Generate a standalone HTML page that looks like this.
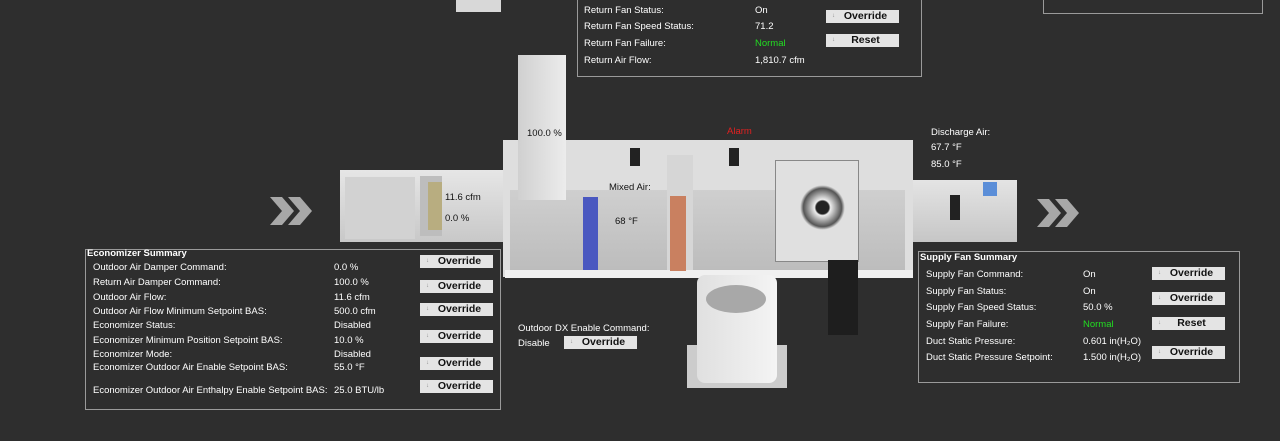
<!DOCTYPE html><html><head><style>
body{margin:0;width:1280px;height:441px;background:#2e2e2e;overflow:hidden;position:relative;font-family:"Liberation Sans",sans-serif;font-size:9.5px;color:#fff}
.a{position:absolute}
.p{position:absolute;border:1px solid #9a9a9a;background:#2e2e2e}
.btn{position:absolute;width:73px;height:13px;background:#e4e4e4;color:#111;font-size:10.5px;line-height:13px;text-align:center;font-weight:bold;text-indent:6px}
.btn:before{content:"↓";font-size:6px;color:#888;position:absolute;left:0px;font-weight:normal}
.g{color:#22dd22}
.k{color:#111}
</style></head><body>
<div class="a" style="left:456px;top:0;width:45px;height:12px;background:#d8d8d8"></div>
<div class="p" style="left:1043px;top:-2px;width:218px;height:14px"></div>
<div class="p" style="left:577px;top:-2px;width:343px;height:77px"></div>
<div class="a" style="left:584px;top:5px">Return Fan Status:</div><div class="a" style="left:755px;top:5px">On</div>
<div class="a" style="left:584px;top:21px">Return Fan Speed Status:</div><div class="a" style="left:755px;top:21px">71.2</div>
<div class="a" style="left:584px;top:38px">Return Fan Failure:</div><div class="a g" style="left:755px;top:38px">Normal</div>
<div class="a" style="left:584px;top:55px">Return Air Flow:</div><div class="a" style="left:755px;top:55px">1,810.7 cfm</div>
<div class="btn" style="left:826px;top:10px">Override</div><div class="btn" style="left:826px;top:34px">Reset</div>

<svg class="a" style="left:268px;top:195px" width="48" height="32"><path d="M2 2h12l12 14-12 14H2l12-14z M20 2h12l12 14-12 14H20l12-14z" fill="#a8a8a8"/></svg>
<svg class="a" style="left:1035px;top:197px" width="48" height="32"><path d="M2 2h12l12 14-12 14H2l12-14z M20 2h12l12 14-12 14H20l12-14z" fill="#a8a8a8"/></svg>
<div class="a" style="left:340px;top:170px;width:172px;height:72px;background:linear-gradient(#e6e6e6,#c8c8c8)"></div>
<div class="a" style="left:345px;top:177px;width:70px;height:62px;background:#d2d2d2"></div>
<div class="a" style="left:420px;top:176px;width:22px;height:60px;background:#bdbdbd"></div>
<div class="a" style="left:428px;top:182px;width:14px;height:48px;background:#b8ad80"></div>
<div class="a" style="left:905px;top:180px;width:112px;height:62px;background:linear-gradient(#e4e4e4,#c6c6c6)"></div>
<div class="a" style="left:950px;top:195px;width:10px;height:25px;background:#222"></div>
<div class="a" style="left:983px;top:182px;width:14px;height:14px;background:#5b8ed8"></div>
<div class="a" style="left:503px;top:140px;width:410px;height:137px;background:#dedede"></div>
<div class="a" style="left:510px;top:190px;width:395px;height:82px;background:linear-gradient(#cfcfcf,#bcbcbc)"></div>
<div class="a" style="left:505px;top:270px;width:408px;height:8px;background:#f0f0f0"></div>
<div class="a" style="left:518px;top:55px;width:48px;height:145px;background:linear-gradient(90deg,#d0d0d0,#ececec)"></div>
<div class="a" style="left:583px;top:197px;width:15px;height:73px;background:#4a58c0"></div>
<div class="a" style="left:667px;top:155px;width:26px;height:115px;background:#d6d6d6"></div>
<div class="a" style="left:670px;top:196px;width:16px;height:75px;background:#c98060"></div>
<div class="a" style="left:630px;top:148px;width:10px;height:18px;background:#222"></div>
<div class="a" style="left:729px;top:148px;width:10px;height:18px;background:#222"></div>
<div class="a" style="left:775px;top:160px;width:82px;height:100px;background:#e0e0e0;border:1px solid #888"></div>
<div class="a" style="left:800px;top:185px;width:45px;height:45px;border-radius:50%;background:radial-gradient(#222 20%,#eee 25%,#555 60%,#ddd 70%)"></div>
<div class="a" style="left:828px;top:260px;width:30px;height:75px;background:#1e1e1e"></div>
<div class="a" style="left:687px;top:345px;width:100px;height:43px;background:#ccc"></div>
<div class="a" style="left:697px;top:275px;width:80px;height:108px;background:linear-gradient(90deg,#e0e0e0,#f4f4f4);border-radius:8px"></div>
<div class="a" style="left:706px;top:285px;width:60px;height:28px;border-radius:50%;background:#a8a8a8"></div>

<div class="a k" style="left:527px;top:128px">100.0 %</div>
<div class="a k" style="left:445px;top:192px">11.6 cfm</div>
<div class="a k" style="left:445px;top:213px">0.0 %</div>
<div class="a k" style="left:609px;top:182px">Mixed Air:</div>
<div class="a k" style="left:615px;top:216px">68 °F</div>
<div class="a" style="left:727px;top:126px;color:#e02020">Alarm</div>
<div class="a" style="left:931px;top:127px">Discharge Air:</div>
<div class="a" style="left:931px;top:142px">67.7 °F</div>
<div class="a" style="left:931px;top:159px">85.0 °F</div>
<div class="a" style="left:518px;top:323px">Outdoor DX Enable Command:</div>
<div class="a" style="left:518px;top:338px">Disable</div>
<div class="btn" style="left:564px;top:336px">Override</div>

<div class="p" style="left:85px;top:249px;width:414px;height:159px"></div>
<div class="a" style="left:87px;top:248px;font-weight:bold">Economizer Summary</div>
<div class="a" style="left:93px;top:262px">Outdoor Air Damper Command:</div><div class="a" style="left:334px;top:262px">0.0 %</div>
<div class="a" style="left:93px;top:277px">Return Air Damper Command:</div><div class="a" style="left:334px;top:277px">100.0 %</div>
<div class="a" style="left:93px;top:292px">Outdoor Air Flow:</div><div class="a" style="left:334px;top:292px">11.6 cfm</div>
<div class="a" style="left:93px;top:306px">Outdoor Air Flow Minimum Setpoint BAS:</div><div class="a" style="left:334px;top:306px">500.0 cfm</div>
<div class="a" style="left:93px;top:320px">Economizer Status:</div><div class="a" style="left:334px;top:320px">Disabled</div>
<div class="a" style="left:93px;top:335px">Economizer Minimum Position Setpoint BAS:</div><div class="a" style="left:334px;top:335px">10.0 %</div>
<div class="a" style="left:93px;top:349px">Economizer Mode:</div><div class="a" style="left:334px;top:349px">Disabled</div>
<div class="a" style="left:93px;top:362px">Economizer Outdoor Air Enable Setpoint BAS:</div><div class="a" style="left:334px;top:362px">55.0 °F</div>
<div class="a" style="left:93px;top:385px">Economizer Outdoor Air Enthalpy Enable Setpoint BAS:</div><div class="a" style="left:334px;top:385px">25.0 BTU/lb</div>
<div class="btn" style="left:420px;top:255px">Override</div>
<div class="btn" style="left:420px;top:280px">Override</div>
<div class="btn" style="left:420px;top:303px">Override</div>
<div class="btn" style="left:420px;top:330px">Override</div>
<div class="btn" style="left:420px;top:357px">Override</div>
<div class="btn" style="left:420px;top:380px">Override</div>

<div class="p" style="left:918px;top:251px;width:320px;height:130px"></div>
<div class="a" style="left:920px;top:252px;font-weight:bold">Supply Fan Summary</div>
<div class="a" style="left:926px;top:269px">Supply Fan Command:</div><div class="a" style="left:1083px;top:269px">On</div>
<div class="a" style="left:926px;top:286px">Supply Fan Status:</div><div class="a" style="left:1083px;top:286px">On</div>
<div class="a" style="left:926px;top:302px">Supply Fan Speed Status:</div><div class="a" style="left:1083px;top:302px">50.0 %</div>
<div class="a" style="left:926px;top:319px">Supply Fan Failure:</div><div class="a g" style="left:1083px;top:319px">Normal</div>
<div class="a" style="left:926px;top:336px">Duct Static Pressure:</div><div class="a" style="left:1083px;top:336px">0.601 in(H₂O)</div>
<div class="a" style="left:926px;top:352px">Duct Static Pressure Setpoint:</div><div class="a" style="left:1083px;top:352px">1.500 in(H₂O)</div>
<div class="btn" style="left:1152px;top:267px">Override</div>
<div class="btn" style="left:1152px;top:292px">Override</div>
<div class="btn" style="left:1152px;top:317px">Reset</div>
<div class="btn" style="left:1152px;top:346px">Override</div>
</body></html>
